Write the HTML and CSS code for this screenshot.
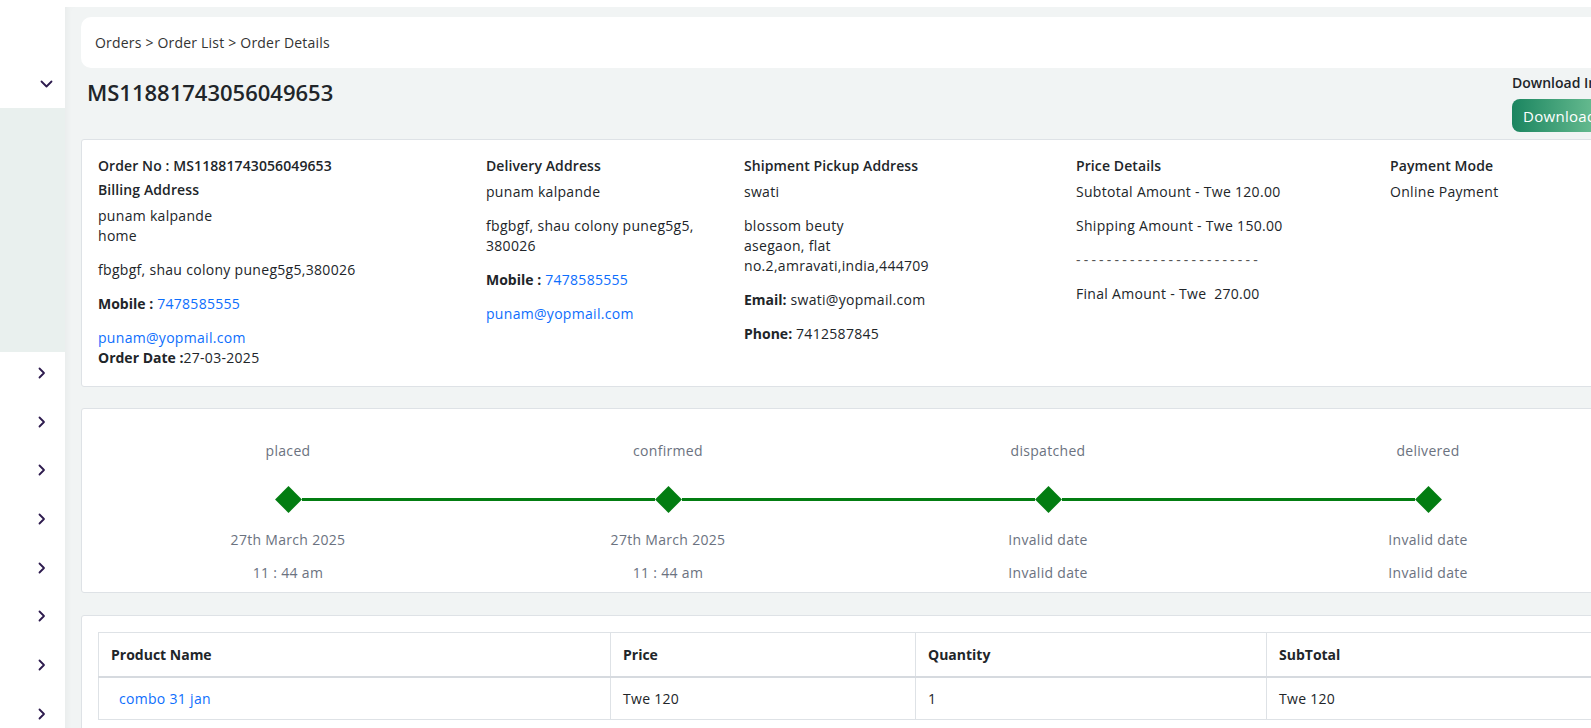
FILE: index.html
```html
<!DOCTYPE html>
<html lang="en">
<head>
  <meta charset="UTF-8">
  <meta name="viewport" content="width=device-width, initial-scale=1.0">
  <title>Order Details</title>
  <link rel="stylesheet" href="styles.css">
</head>
<body>
  <div class="layout">
    <aside class="sidebar">
      <div class="side-top">
        <svg class="chev-down" width="13" height="8" viewBox="0 0 13 8"><path d="M1.5 1.5l5 5 5-5" fill="none" stroke="#2d1b4e" stroke-width="1.8" stroke-linecap="round" stroke-linejoin="round"/></svg>
      </div>
      <div class="side-panel"></div>
      <ul class="side-menu">
        <li><svg width="8" height="12" viewBox="0 0 8 12"><path d="M1.5 1.5l4.5 4.5-4.5 4.5" fill="none" stroke="#2d1b4e" stroke-width="1.8" stroke-linecap="round" stroke-linejoin="round"/></svg></li>
        <li><svg width="8" height="12" viewBox="0 0 8 12"><path d="M1.5 1.5l4.5 4.5-4.5 4.5" fill="none" stroke="#2d1b4e" stroke-width="1.8" stroke-linecap="round" stroke-linejoin="round"/></svg></li>
        <li><svg width="8" height="12" viewBox="0 0 8 12"><path d="M1.5 1.5l4.5 4.5-4.5 4.5" fill="none" stroke="#2d1b4e" stroke-width="1.8" stroke-linecap="round" stroke-linejoin="round"/></svg></li>
        <li><svg width="8" height="12" viewBox="0 0 8 12"><path d="M1.5 1.5l4.5 4.5-4.5 4.5" fill="none" stroke="#2d1b4e" stroke-width="1.8" stroke-linecap="round" stroke-linejoin="round"/></svg></li>
        <li><svg width="8" height="12" viewBox="0 0 8 12"><path d="M1.5 1.5l4.5 4.5-4.5 4.5" fill="none" stroke="#2d1b4e" stroke-width="1.8" stroke-linecap="round" stroke-linejoin="round"/></svg></li>
        <li><svg width="8" height="12" viewBox="0 0 8 12"><path d="M1.5 1.5l4.5 4.5-4.5 4.5" fill="none" stroke="#2d1b4e" stroke-width="1.8" stroke-linecap="round" stroke-linejoin="round"/></svg></li>
        <li><svg width="8" height="12" viewBox="0 0 8 12"><path d="M1.5 1.5l4.5 4.5-4.5 4.5" fill="none" stroke="#2d1b4e" stroke-width="1.8" stroke-linecap="round" stroke-linejoin="round"/></svg></li>
        <li><svg width="8" height="12" viewBox="0 0 8 12"><path d="M1.5 1.5l4.5 4.5-4.5 4.5" fill="none" stroke="#2d1b4e" stroke-width="1.8" stroke-linecap="round" stroke-linejoin="round"/></svg></li>
      </ul>
    </aside>

    <main class="content">
      <div class="crumbs">Orders &gt; Order List &gt; Order Details</div>

      <div class="page-head">
        <h1 class="order-title">MS11881743056049653</h1>
        <div class="download-box">
          <div class="download-label">Download Invoice</div>
          <button class="btn-download">Download</button>
        </div>
      </div>

      <!-- order info -->
      <section class="card info-card">
        <div class="info-col">
          <h6 class="first">Order No : MS11881743056049653</h6>
          <h6>Billing Address</h6>
          <p>punam kalpande<br>home</p>
          <p>fbgbgf, shau colony puneg5g5,380026</p>
          <p><b>Mobile :</b> <a href="#">7478585555</a></p>
          <p class="tight"><a href="#">punam@yopmail.com</a></p>
          <p><b>Order Date :</b>27-03-2025</p>
        </div>
        <div class="info-col">
          <h6>Delivery Address</h6>
          <p>punam kalpande</p>
          <p>fbgbgf, shau colony puneg5g5,<br>380026</p>
          <p><b>Mobile :</b> <a href="#">7478585555</a></p>
          <p><a href="#">punam@yopmail.com</a></p>
        </div>
        <div class="info-col">
          <h6>Shipment Pickup Address</h6>
          <p>swati</p>
          <p>blossom beuty<br>asegaon, flat<br>no.2,amravati,india,444709</p>
          <p><b>Email:</b> swati@yopmail.com</p>
          <p><b>Phone:</b> 7412587845</p>
        </div>
        <div class="info-col">
          <h6>Price Details</h6>
          <p>Subtotal Amount - Twe 120.00</p>
          <p>Shipping Amount - Twe 150.00</p>
          <p class="dashes">------------------------</p>
          <p>Final Amount - Twe &nbsp;270.00</p>
        </div>
        <div class="info-col">
          <h6>Payment Mode</h6>
          <p>Online Payment</p>
        </div>
      </section>

      <!-- tracking -->
      <section class="card track-card">
        <div class="track">
          <div class="step">
            <div class="step-label">placed</div>
            <div class="marker"><span class="seg"></span><span class="diamond"></span><span class="seg"></span></div>
            <div class="step-date">27th March 2025</div>
            <div class="step-time">11 : 44 am</div>
          </div>
          <div class="step">
            <div class="step-label">confirmed</div>
            <div class="marker"><span class="seg"></span><span class="diamond"></span><span class="seg"></span></div>
            <div class="step-date">27th March 2025</div>
            <div class="step-time">11 : 44 am</div>
          </div>
          <div class="step">
            <div class="step-label">dispatched</div>
            <div class="marker"><span class="seg"></span><span class="diamond"></span><span class="seg"></span></div>
            <div class="step-date">Invalid date</div>
            <div class="step-time">Invalid date</div>
          </div>
          <div class="step">
            <div class="step-label">delivered</div>
            <div class="marker"><span class="seg"></span><span class="diamond"></span><span class="seg"></span></div>
            <div class="step-date">Invalid date</div>
            <div class="step-time">Invalid date</div>
          </div>
        </div>
      </section>

      <!-- products -->
      <section class="card items-card">
        <table class="items">
          <colgroup>
            <col class="col-name">
            <col class="col-price">
            <col class="col-qty">
            <col>
          </colgroup>
          <thead>
            <tr><th>Product Name</th><th>Price</th><th>Quantity</th><th>SubTotal</th></tr>
          </thead>
          <tbody>
            <tr><td><a href="#" class="product-link">combo 31 jan</a></td><td>Twe 120</td><td>1</td><td>Twe 120</td></tr>
          </tbody>
        </table>
      </section>
    </main>
  </div>
</body>
</html>
```

FILE: styles.css
```css
body {
  margin: 0;
  background-color: #fff;
  font-family: "Open Sans", "Noto Sans", sans-serif;
  font-size: 14px;
  letter-spacing: 0.3px;
  color: #212529;
  overflow: hidden;
}

a {
  color: #0d6efd;
  text-decoration: none;
}

.layout {
  display: flex;
  align-items: flex-start;
}

/* sidebar (collapsed, only the arrows show) */
.sidebar {
  width: 65px;
  flex: none;
  background-color: #fff;
}

.side-top {
  height: 108px;
  box-sizing: border-box;
  padding: 80px 0 0 40px;
}

.chev-down {
  display: block;
}

.side-panel {
  height: 244px;
  background-color: #e9f0ee;
}

.side-menu {
  list-style: none;
  margin: 0;
  padding: 0;
}

.side-menu li {
  height: 48.7px;
  box-sizing: border-box;
  padding: 15px 0 0 38px;
}

.side-menu svg {
  display: block;
}

/* main area */
.content {
  flex: none;
  width: 1586px;
  min-height: 721px;
  margin-top: 7px;
  box-sizing: border-box;
  padding: 10px 16px 0;
  background-color: #f1f4f4;
  box-shadow: inset 6px 0 8px -6px rgba(0, 0, 0, 0.06);
}

.crumbs {
  height: 51px;
  line-height: 51px;
  padding-left: 14px;
  background-color: #fff;
  border-radius: 10px;
  color: #333;
  letter-spacing: 0.2px;
}

.page-head {
  display: flex;
  justify-content: space-between;
  align-items: flex-start;
  margin-top: 5px;
  height: 66px;
}

.order-title {
  margin: 5px 0 0 6px;
  font-size: 22px;
  font-weight: 600;
  line-height: 28px;
  letter-spacing: 0;
  color: #212529;
}

.download-box {
  width: 123px;
}

.download-label {
  line-height: 20px;
  font-weight: 600;
  letter-spacing: 0;
  white-space: nowrap;
}

.btn-download {
  margin-top: 6px;
  height: 33px;
  padding: 0 11px;
  border: none;
  border-radius: 8px;
  background: linear-gradient(90deg, #1b8560 0%, #72c397 100%);
  color: #fff;
  font-family: inherit;
  font-size: 15px;
  letter-spacing: 0.3px;
}

.card {
  background-color: #fff;
  border: 1px solid #dee2e6;
  border-radius: 3px;
}

/* info */
.info-card {
  display: grid;
  grid-template-columns: 388px 258px 332px 314px 1fr;
  padding: 16px 16px 18px;
}

.info-col h6 {
  margin: 0 0 6px;
  font-size: 14px;
  font-weight: 600;
  line-height: 20px;
  letter-spacing: 0.1px;
}

.info-col h6.first {
  margin-bottom: 4px;
}

.info-col p {
  margin: 0 0 14px;
  line-height: 20px;
}

.info-col p:last-child {
  margin-bottom: 0;
}

.info-col p.tight {
  margin-bottom: 0;
}

.info-col b {
  font-weight: 700;
  letter-spacing: 0;
}

.info-col .dashes {
  color: #555;
  letter-spacing: 3.2px;
}

/* tracking */
.track-card {
  margin-top: 21px;
  padding: 32px 16px 9px;
}

.track {
  display: flex;
}

.step {
  width: 380px;
  flex: none;
  text-align: center;
  color: #6b7280;
  line-height: 20px;
}

.marker {
  display: flex;
  align-items: center;
  height: 27px;
  margin-top: 25px;
}

.seg {
  flex: 1;
  height: 3px;
  background-color: #037d12;
}

.step:first-child .seg:first-child,
.step:last-child .seg:last-child {
  visibility: hidden;
}

.diamond {
  width: 19px;
  height: 19px;
  margin: 0 4px;
  background-color: #037d12;
  transform: rotate(45deg);
}

.step-date {
  margin-top: 17px;
}

.step-time {
  margin-top: 13px;
}

/* products */
.items-card {
  margin-top: 22px;
  padding: 16px 16px 16px;
}

.items {
  width: 1520px;
  table-layout: fixed;
  border-collapse: collapse;
}

.col-name {
  width: 512px;
}

.col-price {
  width: 305px;
}

.col-qty {
  width: 351px;
}

.items th,
.items td {
  border: 1px solid #dee2e6;
  padding: 11px 12px 10px;
  line-height: 20px;
  text-align: left;
}

.items th {
  padding: 12px 12px 11px;
  font-weight: 700;
  letter-spacing: 0;
  border-bottom: 2px solid #d6dadf;
}

.product-link {
  padding-left: 8px;
}
```
